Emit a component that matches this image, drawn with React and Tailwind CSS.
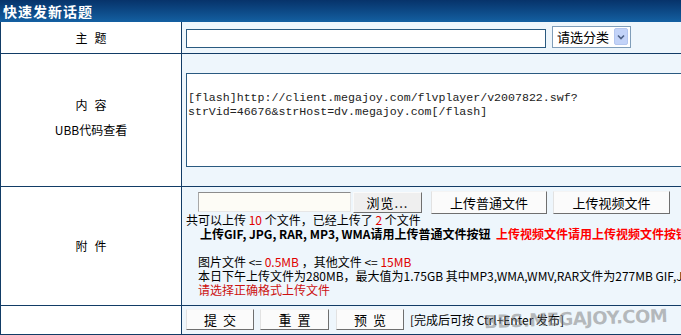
import React from 'react';

const line = 'border-[#123c66]';

const OldButton = ({ children, className = '' }) => (
  <button
    type="button"
    className={`flex items-center justify-center bg-[#fbfbfb] border border-t-[#f4f4f4] border-l-[#e2e2e2] border-r-[#6f6f6f] border-b-[#6f6f6f] text-[13px] leading-none text-black ${className}`}
  >
    {children}
  </button>
);

// two-char label with a gap, like "主 题"
const Pair = ({ a, b }) => (
  <span className="flex gap-[7px] leading-[14px]">
    <span>{a}</span>
    <span>{b}</span>
  </span>
);

const App = () => {
  return (
    <div className="relative w-[681px] h-[335px] overflow-hidden bg-white text-[12px] text-black font-['Noto_Sans_CJK_SC',sans-serif]">
      <div className="h-[22px] w-[780px] bg-linear-to-b from-[#07336a] to-[#1460a2] pl-[3px] text-[14px] leading-[22px] font-bold text-white tracking-[1px]">
        快速发新话题
      </div>

      <div className={`w-[780px] border-l ${line}`}>
        {/* 主题 */}
        <div className={`flex h-[32px] border-b ${line}`}>
          <div className={`w-[181px] border-r ${line} bg-white flex items-center justify-center`}>
            <Pair a="主" b="题" />
          </div>
          <div className="flex-1 bg-[#eef6fc] flex items-center pl-[4px] gap-[6px]">
            <input type="text" className="w-[360px] h-[19px] mt-[1px] border border-[#2a5a80] bg-white outline-none" />
            <div className="w-[79px] h-[22px] -mt-[2px] border border-[#7f9db9] bg-white flex items-center justify-between pl-[4px] pr-[2px]">
              <span className="text-[13px] leading-none">请选分类</span>
              <span className="w-[14px] h-[17px] rounded-[2px] bg-[#c3d3f8] border border-[#b4c6ef] flex items-center justify-center">
                <svg width="8" height="6" viewBox="0 0 8 6">
                  <path d="M1 1.5 L4 4.5 L7 1.5" fill="none" stroke="#4d6185" strokeWidth="1.6" />
                </svg>
              </span>
            </div>
          </div>
        </div>

        {/* 内容 */}
        <div className={`flex h-[133px] border-b ${line}`}>
          <div className={`w-[181px] border-r ${line} bg-white flex flex-col items-center justify-center gap-[11px] pb-[5px] leading-[14px]`}>
            <Pair a="内" b="容" />
            <span>UBB代码查看</span>
          </div>
          <div className="flex-1 bg-[#eef6fc] pl-[4px] pt-[19px]">
            <textarea
              readOnly
              defaultValue={'[flash]http://client.megajoy.com/flvplayer/v2007822.swf?\nstrVid=46676&strHost=dv.megajoy.com[/flash]'}
              className="block w-[560px] h-[94px] resize-none overflow-hidden border border-[#2a5a80] bg-white pl-[1px] pt-[17px] text-[11.6px] leading-[14px] text-[#222] outline-none font-['Liberation_Mono','Noto_Sans_CJK_SC',monospace]"
            />
          </div>
        </div>

        {/* 附件 */}
        <div className={`flex h-[119px] border-b ${line}`}>
          <div className={`w-[181px] border-r ${line} bg-white flex items-center justify-center`}>
            <Pair a="附" b="件" />
          </div>
          <div className="flex-1 bg-[#eef6fc] pt-[4px] pl-[4px] leading-[14px]">
            <div className="flex items-center h-[22px] pl-[12px]">
              <div className="w-[153px] h-[20px] border border-t-[#8c8c8c] border-l-[#a8a8a8] border-r-[#e6e6e6] border-b-[#e6e6e6] bg-[#fdfcf6]" />
              <button
                type="button"
                className="ml-[2px] w-[69px] h-[21px] bg-[#efefef] border border-t-[#fafafa] border-l-[#fafafa] border-r-[#6f6f6f] border-b-[#6f6f6f] text-[13px] leading-none tracking-[1px]"
              >
                浏览...
              </button>
              <OldButton className="ml-[9px] w-[116px] h-[23px]">上传普通文件</OldButton>
              <OldButton className="ml-[6px] w-[117px] h-[23px]">上传视频文件</OldButton>
            </div>
            <div className="whitespace-nowrap">
              共可以上传 <span className="text-[#e00000]">10</span> 个文件，已经上传了 <span className="text-[#e00000]">2</span> 个文件
            </div>
            <div className="whitespace-nowrap pl-[14px] font-bold">
              上传GIF, JPG, RAR, MP3, WMA请用上传普通文件按钮&nbsp;&nbsp;
              <span className="text-[#ff0000]">上传视频文件请用上传视频文件按钮</span>
            </div>
            <div className="h-[14px]" />
            <div className="whitespace-nowrap pl-[12px]">
              图片文件 &lt;= <span className="text-[#e00000]">0.5MB</span> ，其他文件 &lt;= <span className="text-[#e00000]">15MB</span>
            </div>
            <div className="whitespace-nowrap pl-[12px]">
              本日下午上传文件为280MB，最大值为1.75GB 其中MP3,WMA,WMV,RAR文件为277MB GIF,JPG文件为3MB
            </div>
            <div className="whitespace-nowrap pl-[12px] text-[#cc1010]">请选择正确格式上传文件</div>
          </div>
        </div>

        {/* 按钮 */}
        <div className={`flex h-[29px] border-b ${line}`}>
          <div className={`w-[181px] border-r ${line} bg-white`} />
          <div className="flex-1 bg-[#eef6fc] flex items-center pl-[4px] pb-[1px]">
            <OldButton className="w-[68px] h-[21px]">提&nbsp;&nbsp;交</OldButton>
            <OldButton className="ml-[6px] w-[69px] h-[21px]">重&nbsp;&nbsp;置</OldButton>
            <OldButton className="ml-[7px] w-[68px] h-[21px]">预&nbsp;&nbsp;览</OldButton>
            <span className="ml-[6px] whitespace-nowrap">[完成后可按 Ctrl+Enter 发布]</span>
          </div>
        </div>
      </div>

      <span className="absolute left-[484px] top-[308px] text-[18px] leading-[22px] font-black tracking-[-0.5px] text-[#7a7a7a]/50 font-['DejaVu_Sans',sans-serif] -rotate-2 pointer-events-none">
        BBS.MEGAJOY.COM
      </span>
    </div>
  );
};

export default App;
